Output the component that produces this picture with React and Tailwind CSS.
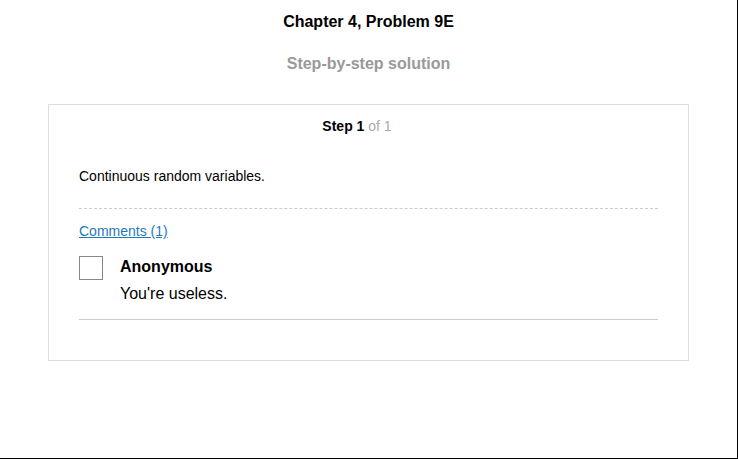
export default function App() {
  return (
    <div className="w-[738px] h-[459px] bg-white border-r border-b border-black font-['Liberation_Sans',Arial,sans-serif] text-black">
      <h1 className="pt-[13px] text-center text-[16px] leading-[18px] font-bold">Chapter 4, Problem 9E</h1>
      <h2 className="mt-[24px] text-center text-[16px] leading-[18px] font-bold text-[#999]">Step-by-step solution</h2>
      <div className="mt-[31px] ml-[48px] w-[641px] h-[257px] border border-[#ddd] px-[30px]">
        <div className="pt-[13px] pr-[23px] text-center text-[14px] leading-[16px]">
          <span className="font-bold">Step 1</span> <span className="text-[#aaa]">of 1</span>
        </div>
        <p className="mt-[34px] text-[14px] leading-[16px]">Continuous random variables.</p>
        <div className="mt-[24px] border-t border-dashed border-[#ccc]"></div>
        <a href="#" className="mt-[14px] inline-block text-[14px] leading-[16px] text-[#1f7ab8] underline">Comments (1)</a>
        <div className="mt-[13px] flex gap-[17px]">
          <div className="w-[24px] h-[24px] border border-[#888] shrink-0"></div>
          <div className="text-[16px] leading-[18px] pt-[2px]">
            <div className="font-bold">Anonymous</div>
            <div className="mt-[9px]">You're useless.</div>
          </div>
        </div>
        <div className="mt-[16px] border-t border-[#ccc]"></div>
      </div>
    </div>
  );
}
